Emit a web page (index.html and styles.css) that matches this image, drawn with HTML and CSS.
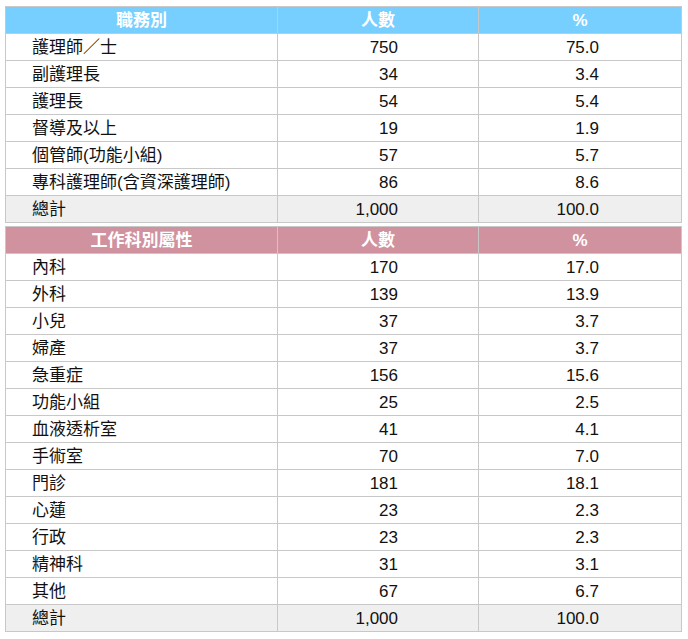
FILE: index.html
```html
<!DOCTYPE html>
<html lang="zh-Hant">
<head>
<meta charset="utf-8">
<link rel="stylesheet" href="styles.css">
</head>
<body>
<div class="page">
<table class="stat">
<colgroup><col class="c1"><col class="c2"><col class="c3"></colgroup>
<thead><tr class="head blue"><th>職務別</th><th>人數</th><th>%</th></tr></thead>
<tbody>
<tr><td class="name">護理師／士</td><td class="num n1">750</td><td class="num n2">75.0</td></tr>
<tr><td class="name">副護理長</td><td class="num n1">34</td><td class="num n2">3.4</td></tr>
<tr><td class="name">護理長</td><td class="num n1">54</td><td class="num n2">5.4</td></tr>
<tr><td class="name">督導及以上</td><td class="num n1">19</td><td class="num n2">1.9</td></tr>
<tr><td class="name">個管師(功能小組)</td><td class="num n1">57</td><td class="num n2">5.7</td></tr>
<tr><td class="name">專科護理師(含資深護理師)</td><td class="num n1">86</td><td class="num n2">8.6</td></tr>
<tr class="total"><td class="name">總計</td><td class="num n1">1,000</td><td class="num n2">100.0</td></tr>
</tbody>
</table>
<table class="stat second">
<colgroup><col class="c1"><col class="c2"><col class="c3"></colgroup>
<thead><tr class="head pink"><th>工作科別屬性</th><th>人數</th><th>%</th></tr></thead>
<tbody>
<tr><td class="name">內科</td><td class="num n1">170</td><td class="num n2">17.0</td></tr>
<tr><td class="name">外科</td><td class="num n1">139</td><td class="num n2">13.9</td></tr>
<tr><td class="name">小兒</td><td class="num n1">37</td><td class="num n2">3.7</td></tr>
<tr><td class="name">婦產</td><td class="num n1">37</td><td class="num n2">3.7</td></tr>
<tr><td class="name">急重症</td><td class="num n1">156</td><td class="num n2">15.6</td></tr>
<tr><td class="name">功能小組</td><td class="num n1">25</td><td class="num n2">2.5</td></tr>
<tr><td class="name">血液透析室</td><td class="num n1">41</td><td class="num n2">4.1</td></tr>
<tr><td class="name">手術室</td><td class="num n1">70</td><td class="num n2">7.0</td></tr>
<tr><td class="name">門診</td><td class="num n1">181</td><td class="num n2">18.1</td></tr>
<tr><td class="name">心蓮</td><td class="num n1">23</td><td class="num n2">2.3</td></tr>
<tr><td class="name">行政</td><td class="num n1">23</td><td class="num n2">2.3</td></tr>
<tr><td class="name">精神科</td><td class="num n1">31</td><td class="num n2">3.1</td></tr>
<tr><td class="name">其他</td><td class="num n1">67</td><td class="num n2">6.7</td></tr>
<tr class="total"><td class="name">總計</td><td class="num n1">1,000</td><td class="num n2">100.0</td></tr>
</tbody>
</table>
</div>
</body>
</html>
```
FILE: styles.css
```css
html, body {
  margin: 0;
  padding: 0;
  background: #ffffff;
}
.page {
  padding: 6px 0 0 5px;
  display: flex;
  flex-direction: column;
  gap: 3px;
}
.stat {
  border-collapse: collapse;
  width: 676px;
  table-layout: fixed;
  font-family: "Liberation Sans", "Noto Sans CJK TC", sans-serif;
  font-size: 17px;
  color: #111111;
}
.c1 { width: 272px; }
.c2 { width: 201px; }
.c3 { width: 203px; }
.stat th, .stat td {
  border: 1px solid #c8c8c8;
  height: 27px;
  padding: 2px 0 0 0;
  box-sizing: border-box;
  line-height: 20px;
  vertical-align: middle;
}
.head th {
  color: #ffffff;
  font-weight: bold;
  text-align: center;
}
.blue th { background: #76cfff; }
.pink th { background: #d192a0; }
.name {
  text-align: left;
  padding-left: 26px !important;
}
.num { text-align: right; }
.n1 { padding-right: 80px !important; }
.n2 { padding-right: 82px !important; }
.total td { background: #efefef; }
```
